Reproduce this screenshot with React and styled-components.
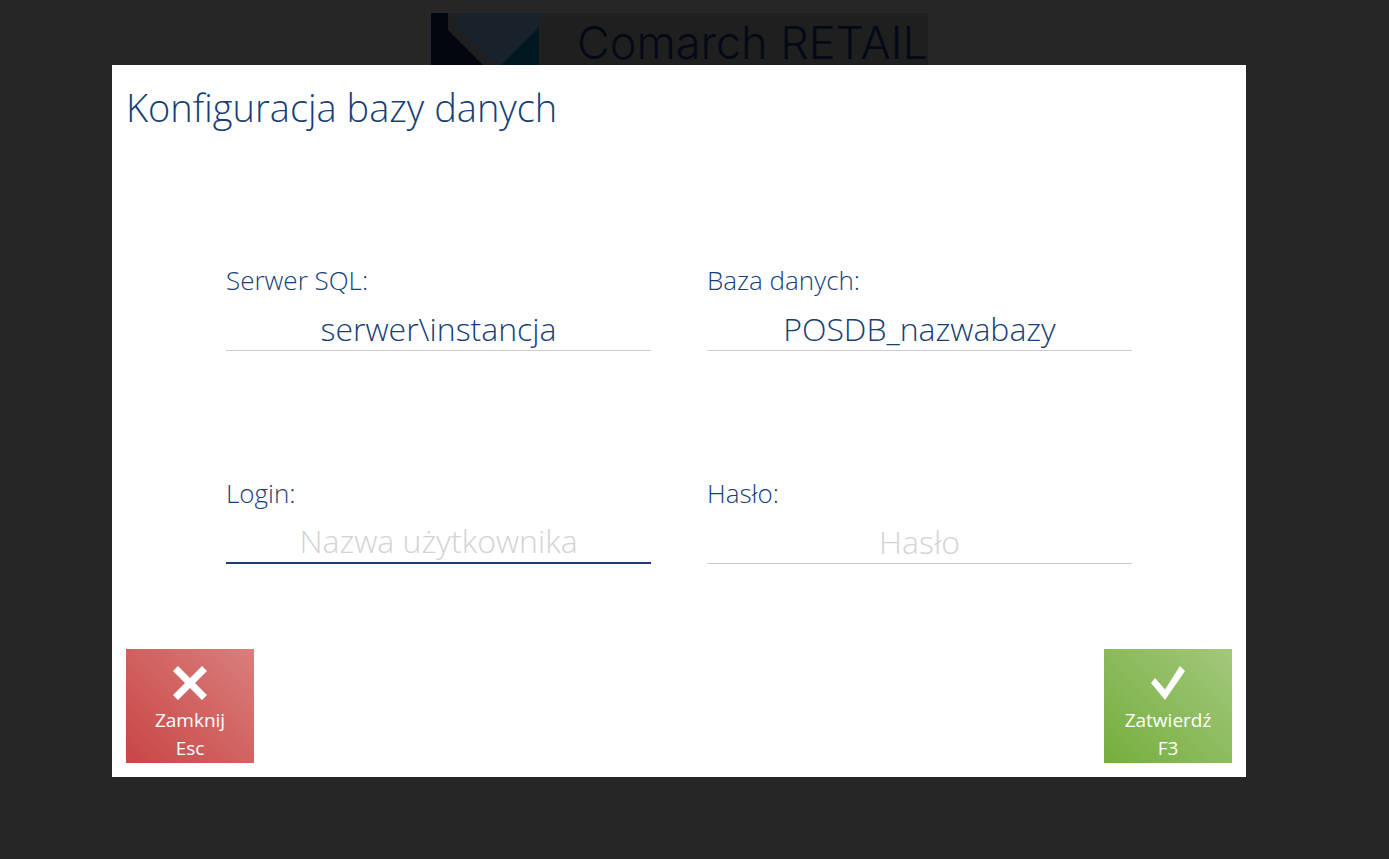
import { useState } from 'react';
import styled, { createGlobalStyle } from 'styled-components';

const fields = [
  { id: 'server', label: 'Serwer SQL:', value: 'serwer\\instancja' },
  { id: 'database', label: 'Baza danych:', value: 'POSDB_nazwabazy' },
  { id: 'login', label: 'Login:', placeholder: 'Nazwa użytkownika', active: true },
  { id: 'password', label: 'Hasło:', placeholder: 'Hasło', type: 'password' },
];

export default function App() {
  const [values, setValues] = useState({ server: fields[0].value, database: fields[1].value });

  return (
    <Page>
      <GlobalStyle />
      <Brand>
        <BrandMark />
        <BrandName>Comarch RETAIL</BrandName>
      </Brand>

      <Overlay>
        <Dialog role="dialog" aria-labelledby="dialog-title">
          <Title id="dialog-title">Konfiguracja bazy danych</Title>

          <Fields>
            {
              fields.map(function(field) {
                return (
                  <Field key={field.id}>
                    <Label htmlFor={field.id}>{field.label}</Label>
                    <Input
                      id={field.id}
                      type={field.type || 'text'}
                      placeholder={field.placeholder}
                      value={values[field.id] || ''}
                      onChange={(e) => setValues({ ...values, [field.id]: e.target.value })}
                      autoComplete="off"
                      spellCheck={false}
                      $active={field.active}
                    />
                  </Field>
                );
              })
            }
          </Fields>

          <Actions>
            <ActionButton type="button" $from="#c84545" $to="#d97f7c">
              <ActionIcon viewBox="0 0 36 36" aria-hidden="true">
                <path d="M6 1 L18 13 L30 1 L35 6 L23 18 L35 30 L30 35 L18 23 L6 35 L1 30 L13 18 L1 6 Z" />
              </ActionIcon>
              <span>Zamknij</span>
              <span>Esc</span>
            </ActionButton>
            <ActionButton type="button" $from="#74ae3d" $to="#a3c87c">
              <ActionIcon viewBox="0 0 36 36" aria-hidden="true">
                <path d="M5 13 L1 18 L15 35 L35 6 L30 1 L15 24.500 Z" />
              </ActionIcon>
              <span>Zatwierdź</span>
              <span>F3</span>
            </ActionButton>
          </Actions>
        </Dialog>
      </Overlay>
    </Page>
  );
}

function BrandMark() {
  return (
    <Mark viewBox="0 0 108 108" aria-hidden="true">
      <path d="M0 0 H17 V17 L108 108 H0 Z" fill="#03060f" />
      <path d="M26 0 H108 V14 L66 56 L26 16 Z" fill="#19212a" />
      <path d="M108 14 V94 L68 54 Z" fill="#001820" />
    </Mark>
  );
}

const GlobalStyle = createGlobalStyle`
  * {
    box-sizing: border-box;
  }

  body {
    margin: 0;
    background-color: #262626;
    font-family: 'Open Sans', 'Noto Sans', sans-serif;
  }
`;

const Page = styled.div`
  position: relative;
  min-height: 100vh;
  overflow: hidden;
`;

const Brand = styled.header`
  display: flex;
  align-items: flex-start;
  gap: 38px;

  width: fit-content;
  height: 108px;
  margin: 13px auto 0;
  transform: translateX(-15px);
  background-color: #1f1f1f;
`;

const Mark = styled.svg`
  width: 108px;
  height: 108px;
  flex-shrink: 0;
`;

const BrandName = styled.div`
  color: #030a16;
  font-family: 'Inter', sans-serif;
  font-size: 45px;
  font-weight: 300;
  line-height: 60px;
  white-space: nowrap;
`;

/* okno dialogowe */
const Overlay = styled.div`
  position: absolute;
  inset: 0;
  padding: 65px 143px 0 112px;
`;

const Dialog = styled.main`
  display: flex;
  flex-direction: column;

  padding: 14px;
  background-color: #fff;
  color: #173f76;
`;

const Title = styled.h1`
  margin: 0;
  font-size: 38px;
  font-weight: 300;
  line-height: 56px;
`;

const Fields = styled.div`
  display: grid;
  grid-template-columns: 1fr 1fr;
  gap: 120px 56px;
  padding: 123px 100px 0;
`;

const Field = styled.div`
  display: flex;
  flex-direction: column;
`;

const Label = styled.label`
  font-size: 26px;
  font-weight: 300;
  line-height: 44px;
`;

const Input = styled.input`
  width: 100%;
  height: 49px;
  padding: 4px 0 0;
  border: none;
  border-bottom: ${(props) => (props.$active ? '2px solid #173f76' : '1px solid #cccccc')};
  outline: none;
  background: transparent;
  color: inherit;
  font-family: inherit;
  font-size: 32px;
  font-weight: 300;
  text-align: center;

  &::placeholder {
    color: #d3d3d3;
    opacity: 1;
  }
`;

const Actions = styled.div`
  display: flex;
  justify-content: space-between;
  margin-top: 85px;
`;

const ActionButton = styled.button`
  display: flex;
  flex-direction: column;
  align-items: center;

  width: 128px;
  height: 114px;
  padding: 16px 0 0;
  border: none;
  background: linear-gradient(45deg, ${(props) => props.$from}, ${(props) => props.$to});
  color: #fff;
  font-family: inherit;
  font-size: 19px;
  line-height: 28px;
  cursor: pointer;
`;

const ActionIcon = styled.svg`
  width: 36px;
  height: 36px;
  margin-bottom: 5px;
  flex-shrink: 0;
  fill: currentColor;
`;
